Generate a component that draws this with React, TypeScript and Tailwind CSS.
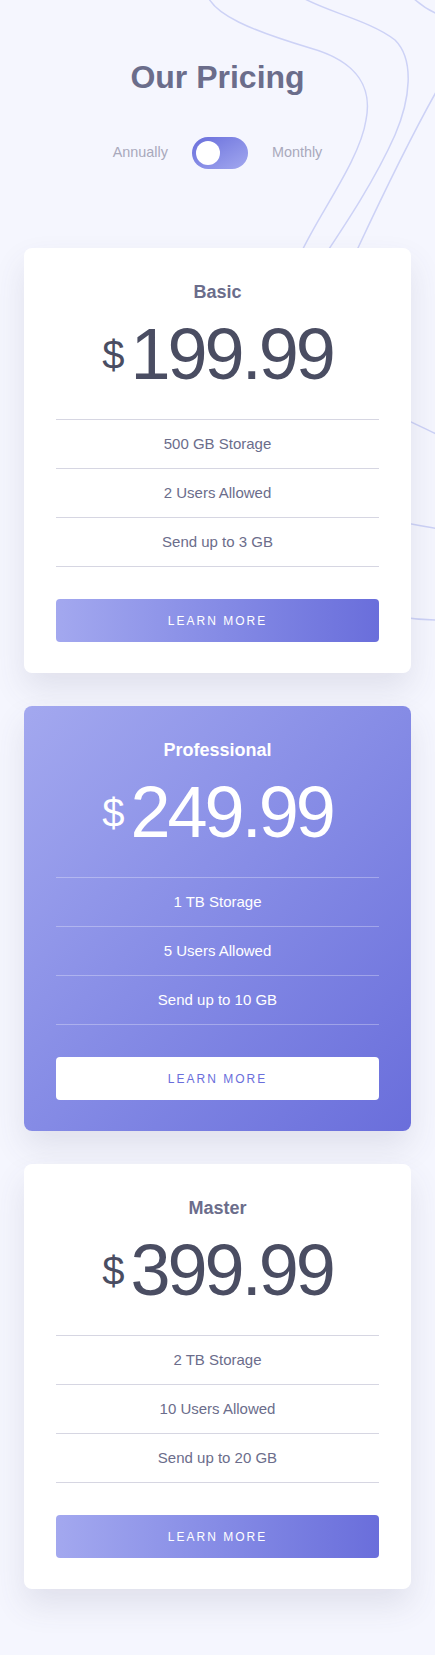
import { useState } from "react";

type Plan = {
  name: string;
  price: string;
  features: string[];
  featured?: boolean;
};

const plans: Plan[] = [
  { name: "Basic", price: "199.99", features: ["500 GB Storage", "2 Users Allowed", "Send up to 3 GB"] },
  {
    name: "Professional",
    price: "249.99",
    features: ["1 TB Storage", "5 Users Allowed", "Send up to 10 GB"],
    featured: true,
  },
  { name: "Master", price: "399.99", features: ["2 TB Storage", "10 Users Allowed", "Send up to 20 GB"] },
];

const Waves = function () {
  return (
    <svg
      className="absolute left-0 top-0 pointer-events-none"
      width="435"
      height="700"
      viewBox="0 0 435 700"
      fill="none"
      stroke="#cdd2f6"
      strokeWidth="1.5"
    >
      {/* contour lines, mostly hidden behind the first card */}
      <path d="M207 -5 C215 15 250 30 310 48 C360 62 372 90 366 120 C360 160 318 215 300 255 C270 320 262 450 300 560 C330 610 400 620 440 620" />
      <path d="M298 -5 C320 10 370 20 395 40 C415 60 410 100 395 135 C375 180 345 225 325 255 C300 300 290 420 330 480 C360 520 400 522 440 529" />
      <path d="M410 -5 C420 5 432 12 440 15" />
      <path d="M440 85 C420 120 385 190 357 250 C340 290 330 340 355 380 C375 410 410 420 440 436" />
    </svg>
  );
};

const PlanCard = function ({ name, price, features, featured }: Plan) {
  return (
    <div
      className={`rounded-lg px-8 pt-[35px] pb-[31px] text-center shadow-[0_16px_32px_rgba(70,72,110,0.12)] ${
        featured ? "bg-linear-to-br from-[#a3a8ef] to-[#6a6edb] text-white" : "bg-white"
      }`}
    >
      <h2 className={`text-[18px] leading-[18px] font-bold ${featured ? "text-white" : "text-[#6b6d8b]"}`}>{name}</h2>
      <div className={`mt-[17px] flex justify-center items-start ${featured ? "text-white" : "text-[#4a4d62]"}`}>
        <span className="text-[40px] leading-[40px] mt-[17px] mr-[6px]">$</span>
        <span className="text-[72px] leading-[72px] tracking-[-3px]">{price}</span>
      </div>
      <ul className={`mt-[29px] border-t ${featured ? "border-white/30" : "border-[#d6d6e2]"}`}>
        {features.map((f) => (
          <li
            key={f}
            className={`h-[49px] flex items-center justify-center border-b text-[15px] ${
              featured ? "border-white/30 text-white" : "border-[#d6d6e2] text-[#6b6d8b]"
            }`}
          >
            {f}
          </li>
        ))}
      </ul>
      <button
        className={`mt-8 w-full h-[43px] rounded text-[12px] tracking-[2px] ${
          featured ? "bg-white text-[#6a6edb]" : "bg-linear-to-r from-[#a3a8ef] to-[#6a6edb] text-white"
        }`}
      >
        LEARN MORE
      </button>
    </div>
  );
};

export default function App() {
  const [monthly, setMonthly] = useState(false);

  return (
    <div className="relative min-h-screen overflow-hidden bg-[#f5f6fe] font-['Liberation_Sans',Arial,sans-serif]">
      <Waves />
      <div className="relative px-6 pt-[61px] pb-16">
        <h1 className="text-center text-[32px] leading-[32px] font-bold text-[#6b6d8b]">Our Pricing</h1>

        <div className="mt-[44px] flex items-center justify-center gap-6 text-[14.4px] text-[#a9a9bc]">
          <span>Annually</span>
          <button
            onClick={() => setMonthly(!monthly)}
            className="w-14 h-8 rounded-full p-1 flex bg-linear-to-br from-[#6a6edb] to-[#a3a8ef]"
          >
            <span className={`w-6 h-6 rounded-full bg-white ${monthly ? "ml-auto" : ""}`}></span>
          </button>
          <span>Monthly</span>
        </div>

        <div className="mt-[79px] flex flex-col gap-[33px]">
          {plans.map((p) => (
            <PlanCard key={p.name} {...p} />
          ))}
        </div>
      </div>
    </div>
  );
}
